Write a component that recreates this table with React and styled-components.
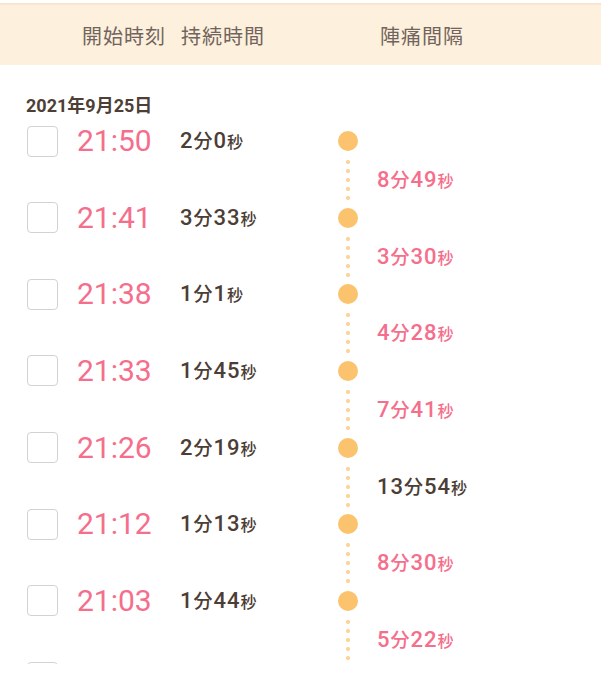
import React from "react";
import styled, { createGlobalStyle } from "styled-components";

const GlobalStyle = createGlobalStyle`
  body {
    margin: 0;
    background: #ffffff;
    font-family: Roboto, "Noto Sans CJK JP", sans-serif;
  }
`;

const Screen = styled.div`
  width: 601px;
  padding-top: 3px;
`;

const Header = styled.div`
  display: grid;
  grid-template-columns: 99px 199px 1fr;
  padding-left: 82px;
  height: 62px;
  align-items: center;
  background: #fdf0dd;
  border-top: 2px solid #f6e6cf;
  box-sizing: border-box;
  font-size: 20px;
  color: #71645c;
  letter-spacing: 1px;
`;

const ScrollArea = styled.div`
  height: 599px;
  overflow: hidden;
`;

const DateLabel = styled.div`
  padding: 32px 0 7px 26px;
  font-size: 18px;
  font-weight: 700;
  line-height: 18px;
  color: #4e3f36;
`;

const Grid = styled.div`
  display: grid;
  grid-template-columns: 50px 103px 158px 20px 1fr;
  padding-left: 27px;
  align-items: center;
`;

const Row = styled(Grid)`
  height: 38px;
`;

const GapRow = styled(Grid)`
  height: 38.67px;
`;

const Check = styled.div`
  width: 31px;
  height: 31px;
  box-sizing: border-box;
  border: 1.5px solid #d2d2d2;
  border-radius: 4px;
`;

const Time = styled.div`
  font-size: 30px;
  color: #f56e8c;
  line-height: 1;
`;

const Duration = styled.div`
  font-size: 22px;
  font-weight: 500;
  color: ${p => (p.$pink ? "#f56e8c" : "#4c3d35")};
  padding-left: ${p => (p.$gap ? "19px" : "0")};
  letter-spacing: 1px;
  line-height: 1;
  white-space: nowrap;
`;

const Unit = styled.span`
  font-size: ${p => (p.$small ? "16px" : "19px")};
`;

const Dot = styled.div`
  width: 20px;
  height: 20px;
  border-radius: 50%;
  background: #fbc36d;
`;

const Dotted = styled.div`
  justify-self: center;
  align-self: start;
  width: 4px;
  height: 40px;
  background-image: radial-gradient(circle at 2px 2px, #fcd49c 1.9px, transparent 2.3px);
  background-size: 4px 9px;
  background-repeat: repeat-y;
`;

const entries = [
  { time: "21:50", dur: [2, 0], gap: [8, 49] },
  { time: "21:41", dur: [3, 33], gap: [3, 30] },
  { time: "21:38", dur: [1, 1], gap: [4, 28] },
  { time: "21:33", dur: [1, 45], gap: [7, 41] },
  { time: "21:26", dur: [2, 19], gap: [13, 54], long: true },
  { time: "21:12", dur: [1, 13], gap: [8, 30] },
  { time: "21:03", dur: [1, 44], gap: [5, 22] }
];

function Span({ value, pink, gap }) {
  return (
    <Duration $pink={pink} $gap={gap}>
      {value[0]}
      <Unit>分</Unit>
      {value[1]}
      <Unit $small>秒</Unit>
    </Duration>
  );
}

export default function App() {
  return (
    <Screen>
      <GlobalStyle />
      <Header>
        <span>開始時刻</span>
        <span>持続時間</span>
        <span>陣痛間隔</span>
      </Header>
      <ScrollArea>
        <DateLabel>2021年9月25日</DateLabel>
        {entries.map(e => (
          <React.Fragment key={e.time}>
            <Row>
              <Check />
              <Time>{e.time}</Time>
              <Span value={e.dur} />
              <Dot />
            </Row>
            <GapRow>
              <span />
              <span />
              <span />
              <Dotted />
              <Span value={e.gap} pink={!e.long} gap />
            </GapRow>
          </React.Fragment>
        ))}
        <Row>
          <Check />
        </Row>
      </ScrollArea>
    </Screen>
  );
}
